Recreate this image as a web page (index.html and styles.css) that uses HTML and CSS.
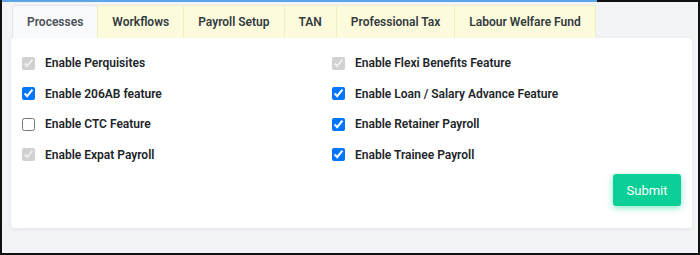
FILE: index.html
```html
<!DOCTYPE html>
<html lang="en">
<head>
  <meta charset="UTF-8">
  <meta name="viewport" content="width=device-width, initial-scale=1.0">
  <title>Payroll Settings</title>
  <link rel="stylesheet" href="styles.css">
</head>
<body>
  <div class="frame">
    <div class="top-line"><span class="line-blue"></span><span class="line-dark"></span></div>

    <!-- Tabs -->
    <ul class="tabs">
      <li class="tab active">Processes</li>
      <li class="tab">Workflows</li>
      <li class="tab">Payroll Setup</li>
      <li class="tab">TAN</li>
      <li class="tab">Professional Tax</li>
      <li class="tab">Labour Welfare Fund</li>
    </ul>

    <!-- Processes -->
    <div class="card">
      <div class="options">
        <label class="option"><input type="checkbox" checked disabled> Enable Perquisites</label>
        <label class="option"><input type="checkbox" checked disabled> Enable Flexi Benefits Feature</label>
        <label class="option"><input type="checkbox" checked> Enable 206AB feature</label>
        <label class="option"><input type="checkbox" checked> Enable Loan / Salary Advance Feature</label>
        <label class="option"><input type="checkbox"> Enable CTC Feature</label>
        <label class="option"><input type="checkbox" checked> Enable Retainer Payroll</label>
        <label class="option"><input type="checkbox" checked disabled> Enable Expat Payroll</label>
        <label class="option"><input type="checkbox" checked> Enable Trainee Payroll</label>
      </div>
      <div class="actions">
        <button class="btn-submit">Submit</button>
      </div>
    </div>
  </div>
</body>
</html>
```

FILE: styles.css
```css
* {
  box-sizing: border-box;
}
body {
  margin: 0;
  font-family: Roboto, "Liberation Sans", Arial, sans-serif;
  background-color: #000;
}
.frame {
  width: 700px;
  height: 255px;
  background-color: #f3f4f8;
  border-left: 2px solid #111;
  border-right: 2px solid #111;
  border-bottom: 2px solid #111;
  overflow: hidden;
}
.top-line {
  display: flex;
  height: 2px;
  margin-left: -2px;
  margin-right: -2px;
}
.line-blue {
  width: 597px;
  background-color: #5aa6e6;
}
.line-dark {
  flex: 1;
  background-color: #111;
}
.tabs {
  display: flex;
  list-style: none;
  margin: 3px 0 0 10px;
  padding: 0;
}
.tab {
  height: 33px;
  line-height: 33px;
  padding: 0 14px;
  font-size: 12px;
  font-weight: 600;
  color: #343a40;
  background-color: #fcfcdd;
  border: 1px solid #efefc4;
  border-bottom: none;
  margin-right: -1px;
}
.tab.active {
  background-color: #f9fafb;
  border-color: #e2e5e9;
  border-radius: 4px 4px 0 0;
  color: #495057;
}
.card {
  width: 681px;
  height: 190px;
  margin-left: 9px;
  background-color: #fff;
  border-radius: 4px;
  box-shadow: 0 1px 4px rgba(154, 161, 171, 0.2);
  padding: 10px 11px 0 11px;
}
.options {
  display: grid;
  grid-template-columns: 310px 1fr;
  grid-auto-rows: 30.5px;
}
.option {
  display: flex;
  align-items: center;
  gap: 10px;
  font-size: 12px;
  font-weight: 600;
  color: #212529;
}
.option input {
  width: 13px;
  height: 13px;
  margin: 0;
}
.actions {
  display: flex;
  justify-content: flex-end;
  margin-top: 4px;
}
.btn-submit {
  width: 68px;
  height: 32px;
  border: none;
  border-radius: 3px;
  background-color: #0acf97;
  color: #fff;
  font-family: Roboto, "Liberation Sans", Arial, sans-serif;
  font-size: 13px;
  box-shadow: 0 2px 6px rgba(10, 207, 151, 0.5);
  cursor: pointer;
}
```
